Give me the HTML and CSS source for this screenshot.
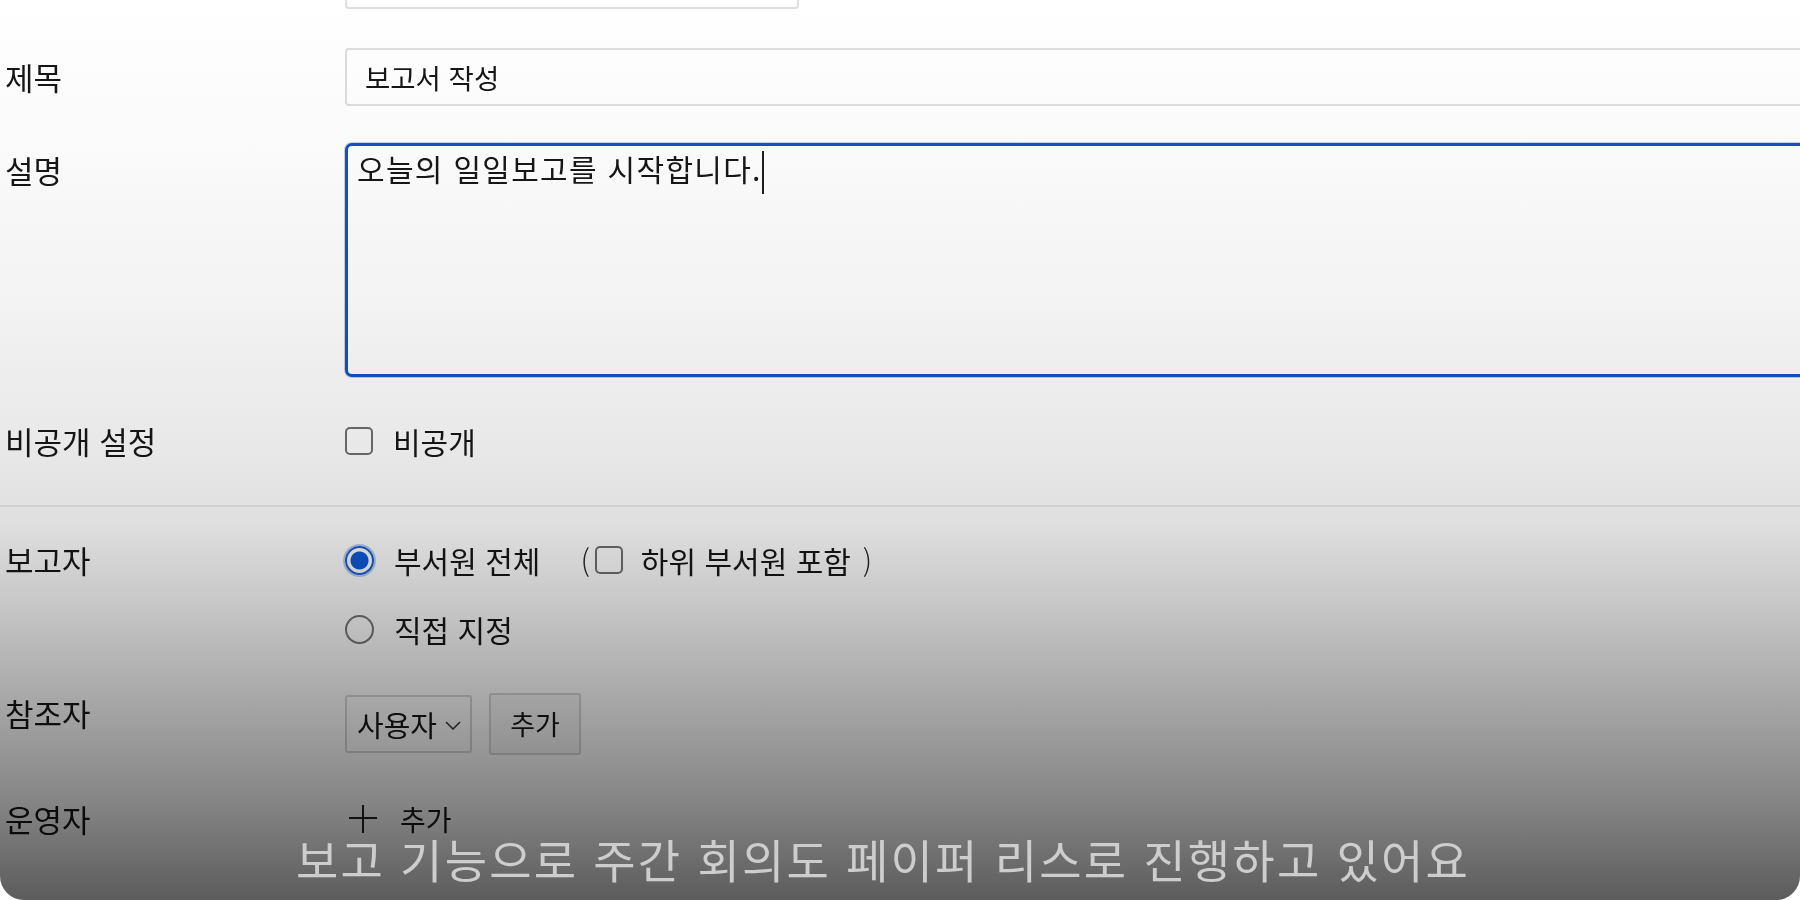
FILE: index.html
```html
<!DOCTYPE html>
<html lang="ko">
<head>
<meta charset="utf-8">
<title>보고서 작성</title>
<link rel="stylesheet" href="styles.css">
</head>
<body>
<div class="frame">
  <div class="form">
    <div class="row row-top">
      <div class="label"></div>
      <div class="field"><div class="input short"></div></div>
    </div>
    <div class="row row-title">
      <div class="label">제목</div>
      <div class="field"><div class="input wide">보고서 작성</div></div>
    </div>
    <div class="row row-desc">
      <div class="label">설명</div>
      <div class="field"><div class="textarea">오늘의 일일보고를 시작합니다.<span class="caret"></span></div></div>
    </div>
    <div class="row row-private">
      <div class="label">비공개 설정</div>
      <div class="field"><span class="checkbox"></span><span class="opt-text">비공개</span></div>
    </div>
  </div>

  <div class="divider"></div>

  <div class="form">
    <div class="row row-reporter">
      <div class="label">보고자</div>
      <div class="field">
        <span class="radio checked"></span><span class="opt-text">부서원 전체</span>
        <span class="paren open">(</span><span class="checkbox"></span><span class="opt-text sub">하위 부서원 포함</span><span class="paren close">)</span>
      </div>
    </div>
    <div class="row row-direct">
      <div class="label"></div>
      <div class="field"><span class="radio"></span><span class="opt-text">직접 지정</span></div>
    </div>
    <div class="row row-ref">
      <div class="label">참조자</div>
      <div class="field">
        <div class="select">사용자<svg class="chev" width="16" height="9" viewBox="0 0 16 9"><path d="M1 1 L8 8 L15 1" fill="none" stroke="#333" stroke-width="1.5"/></svg></div>
        <div class="button">추가</div>
      </div>
    </div>
    <div class="row row-op">
      <div class="label">운영자</div>
      <div class="field">
        <svg class="plus" width="30" height="30" viewBox="0 0 30 30"><path d="M15 1 V29 M1 14 H29" fill="none" stroke="#222" stroke-width="2"/></svg>
        <span class="add-text">추가</span>
      </div>
    </div>
  </div>

  <div class="overlay"></div>
  <div class="subtitle">보고 기능으로 주간 회의도 페이퍼 리스로 진행하고 있어요</div>
</div>
</body>
</html>
```

FILE: styles.css
```css
html, body {
  margin: 0;
  padding: 0;
  background: #ffffff;
}

body {
  width: 1800px;
  height: 900px;
  overflow: hidden;
  font-family: "Noto Sans CJK KR", "Noto Sans", sans-serif;
  color: #161616;
}

.frame {
  position: relative;
  width: 1800px;
  height: 900px;
  overflow: hidden;
  background: #ffffff;
  border-radius: 0 0 24px 24px;
}

.form {
  padding-left: 5px;
}

.row {
  display: grid;
  grid-template-columns: 340px 1fr;
  align-items: center;
}

.label {
  font-size: 31px;
  line-height: 40px;
  white-space: nowrap;
}

.field {
  display: flex;
  align-items: center;
  font-size: 30px;
  line-height: 40px;
  white-space: nowrap;
}

/* text inputs */
.input {
  box-sizing: border-box;
  height: 58px;
  border: 2px solid #dedede;
  border-radius: 4px;
  background: #ffffff;
  display: flex;
  align-items: center;
  padding-left: 18px;
  font-size: 27.5px;
}

.input.short {
  width: 454px;
}

.input.wide {
  width: 1500px;
}

.row-top {
  margin-top: -49px;
}

.row-title {
  margin-top: 39px;
}

.row-desc {
  margin-top: 37px;
  align-items: start;
}

.row-desc .label {
  padding-top: 7px;
}

.textarea {
  box-sizing: border-box;
  width: 1500px;
  height: 234px;
  border: 3px solid #1552c2;
  border-radius: 7px;
  background: #ffffff;
  padding: 3px 0 0 9px;
  font-size: 30px;
  letter-spacing: 1.3px;
  line-height: 38px;
  box-shadow: 0 0 0 1px rgba(120, 160, 230, 0.45);
}

.caret {
  display: inline-block;
  width: 2px;
  height: 43px;
  background: #1d1d1d;
  vertical-align: middle;
  margin-left: 0;
}

.row-private {
  margin-top: 44px;
}

.checkbox {
  box-sizing: border-box;
  width: 28px;
  height: 28px;
  border: 2px solid #707070;
  border-radius: 5px;
  background: #ffffff;
  flex: none;
}

.opt-text {
  margin-left: 20px;
}

.divider {
  margin-top: 44px;
  height: 2px;
  background: #ececec;
}

.row-reporter {
  margin-top: 33px;
}

.radio {
  box-sizing: border-box;
  width: 29px;
  height: 29px;
  border: 2px solid #777777;
  border-radius: 50%;
  background: #ffffff;
  flex: none;
}

.radio.checked {
  border: 2px solid #1c5fd4;
  box-shadow: 0 0 0 2px #b8cef3;
  background: radial-gradient(circle, #0b5ad8 0, #0b5ad8 8.5px, #ffffff 9.5px);
}

.paren {
  color: #2a2a2a;
  font-weight: 300;
}

.paren.open {
  margin-left: 40px;
  margin-right: 5px;
}

.sub {
  margin-left: 18px;
}

.paren.close {
  margin-left: 12px;
}

.row-direct {
  margin-top: 29px;
}

.row-ref {
  margin-top: 44px;
  align-items: start;
}

.row-ref .field {
  height: 62px;
}

.select {
  box-sizing: border-box;
  width: 127px;
  height: 58px;
  border: 2px solid #d6d6d6;
  border-radius: 3px;
  background: #ffffff;
  display: flex;
  align-items: center;
  padding-left: 10px;
  font-size: 29px;
}

.chev {
  margin-left: 8px;
  margin-top: 2px;
  flex: none;
}

.button {
  box-sizing: border-box;
  width: 92px;
  height: 62px;
  margin-left: 17px;
  border: 2px solid #d6d6d6;
  border-radius: 3px;
  background: #f7f7f7;
  display: flex;
  align-items: center;
  justify-content: center;
  font-size: 27px;
}

.row-op {
  margin-top: 44px;
}

.plus {
  margin-left: 3px;
  flex: none;
}

.add-text {
  margin-left: 22px;
  font-size: 28px;
  line-height: 26px;
}

/* darkening video overlay */
.overlay {
  position: absolute;
  inset: 0;
  pointer-events: none;
  mix-blend-mode: multiply;
  background: linear-gradient(to bottom,
    #ffffff 0px,
    #fafafa 150px,
    #f3f3f3 300px,
    #e8e8e8 450px,
    #e0e0e0 520px,
    #c8c8c8 600px,
    #a7a7a7 700px,
    #868686 800px,
    #5c5c5c 900px);
}

.subtitle {
  position: absolute;
  left: 296px;
  top: 837px;
  font-size: 46px;
  line-height: 42px;
  color: #cdcdcd;
  white-space: nowrap;
  letter-spacing: 2.2px;
}
```
